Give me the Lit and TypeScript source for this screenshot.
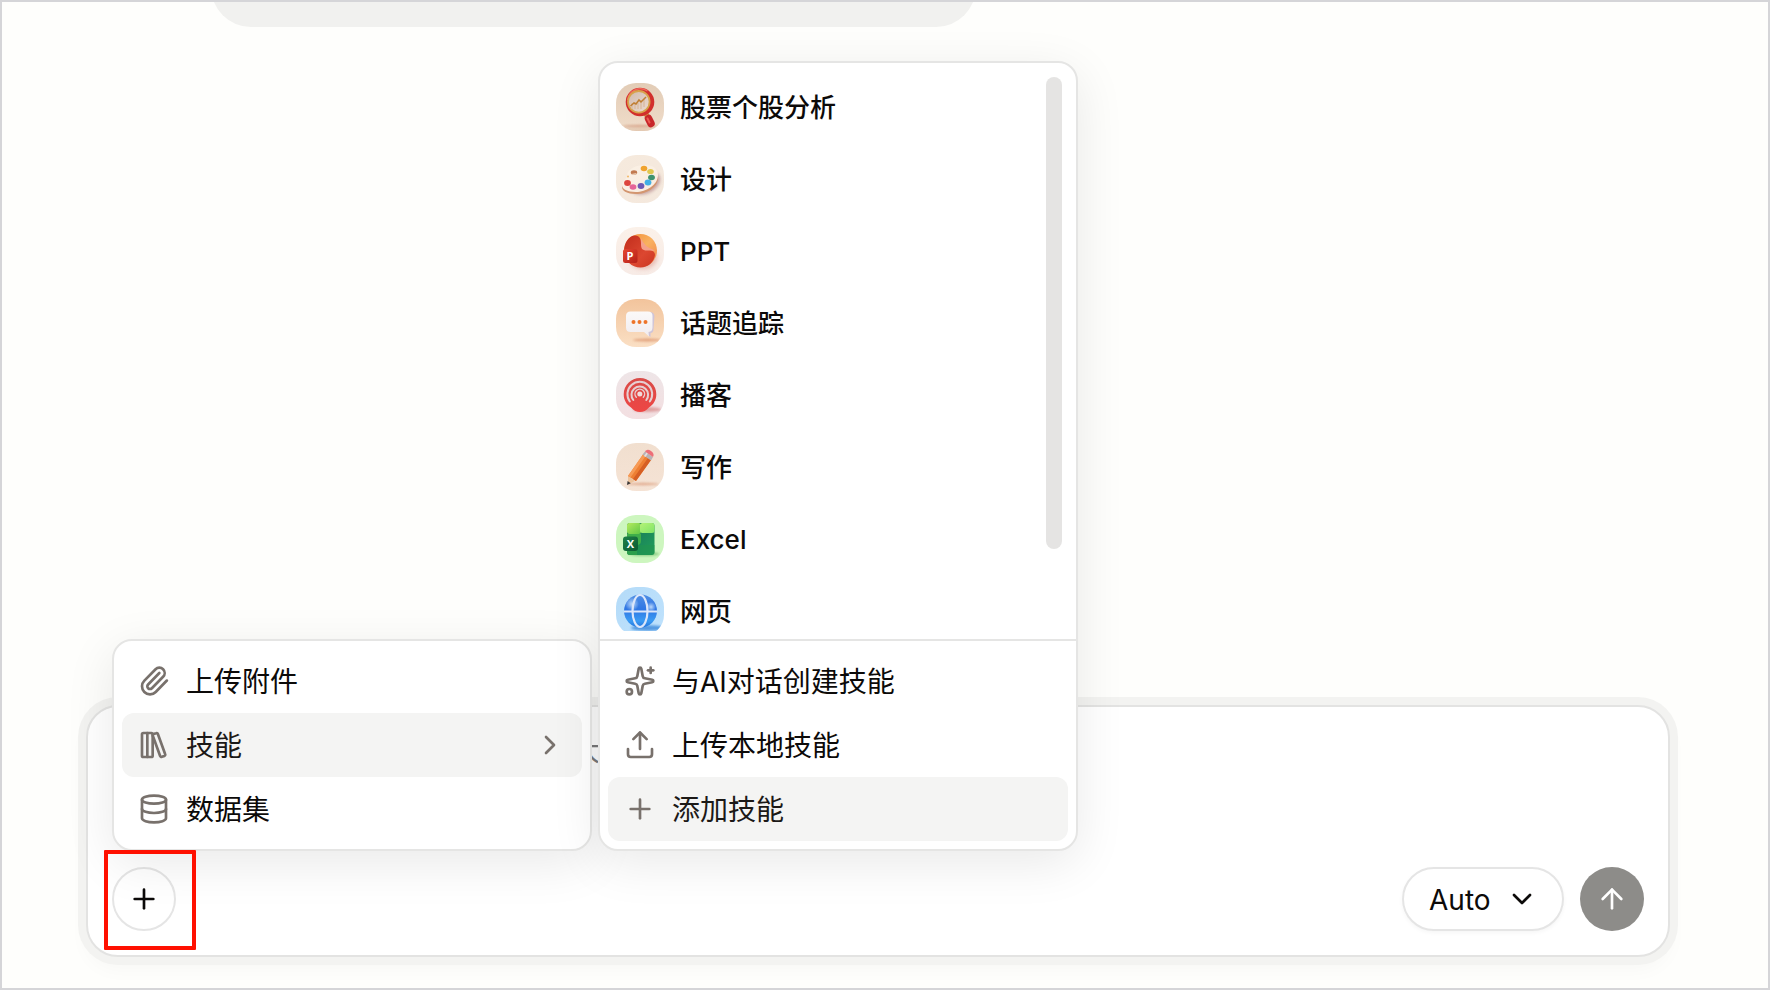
import { LitElement, html, svg, css } from "lit";
import type { SVGTemplateResult } from "lit";
import { customElement, property, state } from "lit/decorators.js";

/* ---------- line icons, drawn on a 24-unit grid ---------- */
const lineIcons: Record<string, SVGTemplateResult> = {
  paperclip: svg`<path d="m16 6-8.414 8.586a2 2 0 0 0 2.829 2.829l8.414-8.586a4 4 0 1 0-5.657-5.657l-8.379 8.551a6 6 0 1 0 8.485 8.485l8.379-8.551"/>`,
  library: svg`<rect width="8" height="18" x="3" y="3" rx="1"/><path d="M7 3v18"/><path d="M20.4 18.9c.2.5-.1 1.1-.6 1.3l-1.900.7c-.5.2-1.100-.1-1.300-.6L11.100 5.100c-.2-.5.1-1.100.6-1.300l1.900-.7c.5-.2 1.100.1 1.300.6Z"/>`,
  database: svg`<ellipse cx="12" cy="5" rx="9" ry="3"/><path d="M3 5v14a9 3 0 0 0 18 0V5"/><path d="M3 12a9 3 0 0 0 18 0"/>`,
  sparkles: svg`<path d="M11.017 2.814a1 1 0 0 1 1.966 0l1.051 5.558a2 2 0 0 0 1.594 1.594l5.558 1.051a1 1 0 0 1 0 1.966l-5.558 1.051a2 2 0 0 0-1.594 1.594l-1.051 5.558a1 1 0 0 1-1.966 0l-1.051-5.558a2 2 0 0 0-1.594-1.594l-5.558-1.051a1 1 0 0 1 0-1.966l5.558-1.051a2 2 0 0 0 1.594-1.594z"/><path d="M20 2v4"/><path d="M22 4h-4"/><circle cx="4" cy="20" r="2"/>`,
  upload: svg`<path d="M12 2.8v12.2"/><path d="m7 7.600 5-5 5 5"/><path d="M3 15v4a2 2 0 0 0 2 2h14a2 2 0 0 0 2-2v-4"/>`,
  plus: svg`<path d="M5 12h14"/><path d="M12 5v14"/>`,
  chevronRight: svg`<path d="m9 18 6-6-6-6"/>`,
  chevronDown: svg`<path d="m6 9 6 6 6-6"/>`,
  arrowUp: svg`<path d="m5 12 7-7 7 7"/><path d="M12 19V5"/>`,
};

/* A soft shadow; its region spans the whole 48-unit tile. */
const blur = (id: string, amount: number) => svg`
  <filter id=${id} filterUnits="userSpaceOnUse" x="-12" y="-12" width="72" height="72">
    <feGaussianBlur stdDeviation=${amount}/>
  </filter>`;

/* ---------- illustrated skill icons, drawn on a 48-unit grid ---------- */
const skillIcons: Record<string, SVGTemplateResult> = {
  stock: svg`
    <defs>
      <linearGradient id="st-bg" x1="0" y1="0" x2="0" y2="1"><stop offset="0" stop-color="#e2ccb6"/><stop offset=".85" stop-color="#eedac7"/><stop offset="1" stop-color="#e3c8b1"/></linearGradient>
      <linearGradient id="st-lens" x1="0" y1="0" x2="1" y2="1"><stop offset="0" stop-color="#d0bab0"/><stop offset="1" stop-color="#ecdccf"/></linearGradient>
      ${blur("st-blur", 1)}
    </defs>
    <rect width="48" height="48" fill="url(#st-bg)"/>
    <ellipse cx="24" cy="43" rx="17" ry="1.200" fill="#cf8c70" opacity=".6" filter="url(#st-blur)"/>
    <path d="m29.500 30 4 7" stroke="#c9923c" stroke-width="5"/>
    <path d="m32.500 35.500 2.500 5" stroke="#c8262a" stroke-width="7.500" stroke-linecap="round"/>
    <path d="m31.500 35.500 2 4" stroke="#ed5a50" stroke-width="2" stroke-linecap="round"/>
    <circle cx="24" cy="19" r="14.300" fill="#d22f2c"/>
    <path d="M11.500 17a13 13 0 0 1 20-9" fill="none" stroke="#f0695c" stroke-width="1.400"/>
    <circle cx="22.800" cy="18.800" r="10.800" fill="url(#st-lens)" stroke="#d7a24c" stroke-width="1.800"/>
    <path d="M16 20v6M19 19v7M22 20v6M25 17v9M28 16v8" stroke="#dbb99d" stroke-width="1.200"/>
    <path d="m14.500 23 3.500-3 2 1 3-4 2 2 5-5" fill="none" stroke="#c07f34" stroke-width="1.500"/>`,
  design: svg`
    <defs>
      <linearGradient id="de-bg" x1="0" y1="0" x2="1" y2="1"><stop offset="0" stop-color="#f6eadd"/><stop offset="1" stop-color="#f4e8dd"/></linearGradient>
      <linearGradient id="de-pal" x1="0" y1="0" x2="1" y2="1"><stop offset="0" stop-color="#fbf1e5"/><stop offset="1" stop-color="#f8ece1"/></linearGradient>
      ${blur("de-blur", 1.5)}
    </defs>
    <rect width="48" height="48" fill="url(#de-bg)"/>
    <ellipse cx="29" cy="28" rx="16" ry="10.500" transform="rotate(-24 29 28)" fill="#b98e90" opacity=".75" filter="url(#de-blur)"/>
    <path d="M11 22.500c0-6 9-11 18-11 8 0 13 4 13 11 0 10.500-12 16.500-22 16.500-9 0-14-3-14-7 0-5 6-6 5-9.500z" fill="#d39670"/>
    <path d="M11 20c1-6 9-10 18-10 8 0 13 4 13 10 0 10-12 17-22 17-9 0-14-3-14-7 0-5 6-6 5-10z" fill="url(#de-pal)"/>
    <ellipse cx="18" cy="17.500" rx="3.200" ry="2.200" fill="#c27a50"/><path d="M15.500 19q3 2 5.500-1z" fill="#f3dcc6"/>
    <ellipse cx="28" cy="13.500" rx="3.300" ry="2.700" fill="#f0a32e"/>
    <ellipse cx="34.500" cy="16.500" rx="3.300" ry="2.600" fill="#dfc852"/>
    <ellipse cx="35.500" cy="22.500" rx="3.400" ry="2.800" fill="#3d9270"/>
    <ellipse cx="32" cy="27.500" rx="3.400" ry="2.900" fill="#41b0e5"/>
    <ellipse cx="25" cy="31" rx="3.400" ry="2.900" fill="#6d59b4"/>
    <ellipse cx="17" cy="32" rx="3.400" ry="2.800" fill="#e56498"/>
    <ellipse cx="11.500" cy="28" rx="3.400" ry="2.900" fill="#dd453d"/>
    <circle cx="12" cy="21.500" r="1" fill="#f2b765"/>`,
  ppt: svg`
    <defs>
      <linearGradient id="pp-bg" x1="0" y1="0" x2="0" y2="1"><stop offset="0" stop-color="#fbf1e9"/><stop offset="1" stop-color="#f7ebe6"/></linearGradient>
      <linearGradient id="pp-or" x1="0" y1="0" x2="1" y2="1"><stop offset="0" stop-color="#f08a35"/><stop offset=".5" stop-color="#f9b160"/><stop offset="1" stop-color="#f08049"/></linearGradient>
      <linearGradient id="pp-red" x1="0" y1="0" x2="1" y2="1"><stop offset="0" stop-color="#c12d1c"/><stop offset=".6" stop-color="#dc4730"/><stop offset="1" stop-color="#cb3521"/></linearGradient>
      <linearGradient id="pp-box" x1="0" y1="0" x2="1" y2="1"><stop offset="0" stop-color="#e54631"/><stop offset="1" stop-color="#b51f17"/></linearGradient>
      ${blur("pp-blur", 2)}
    </defs>
    <rect width="48" height="48" fill="url(#pp-bg)"/>
    <ellipse cx="27" cy="31" rx="14" ry="11" fill="#dc9b90" opacity=".6" filter="url(#pp-blur)"/>
    <circle cx="24.500" cy="23.500" r="16.500" fill="url(#pp-or)"/>
    <path d="M25 11q3 9 14 12.500l-14 1z" fill="#f5a08a"/>
    <path d="M19 8.500c5 0 6 4 6 8 0 5 1 7 6 7 4 0 8 0 8 4.500C38 35 32 40.500 24.500 40.500A16.500 16.500 0 0 1 8 24C8 16 13 8.500 19 8.500z" fill="url(#pp-red)"/>
    <rect x="7" y="22" width="14.500" height="14" rx="2.500" fill="url(#pp-box)"/>
    <text x="14" y="33" text-anchor="middle" class="badge-letter">P</text>`,
  topic: svg`
    <defs>
      <linearGradient id="to-bg" x1="0" y1="0" x2="0" y2="1"><stop offset="0" stop-color="#f2c49c"/><stop offset="1" stop-color="#fadfc4"/></linearGradient>
      <linearGradient id="to-bub" x1="0" y1="0" x2="0" y2="1"><stop offset="0" stop-color="#fbf9f9"/><stop offset="1" stop-color="#f1ecef"/></linearGradient>
      ${blur("to-blur", 1)}
    </defs>
    <rect width="48" height="48" fill="url(#to-bg)"/>
    <ellipse cx="31" cy="41" rx="14" ry="1.500" fill="#d98d66" opacity=".7" filter="url(#to-blur)"/>
    <path d="M15 13h19q4 0 4.500 4l-1 13q0 4-3 4v4l-5-4z" fill="#cfc5d8"/>
    <path d="M14.500 12.500H32q4.500 0 4.500 4.500v11.500q0 4-4 4.500l.500 4.500-5-4.500H14.500Q10 33 10 28.500V17q0-4.500 4.500-4.500z" fill="url(#to-bub)"/>
    <circle cx="17.500" cy="23" r="2" fill="#ee7429"/><circle cx="23.500" cy="23" r="2" fill="#ee7429"/><circle cx="29.500" cy="23" r="2" fill="#ee7429"/>`,
  podcast: svg`
    <defs>
      <linearGradient id="po-bg" x1="0" y1="0" x2="0" y2="1"><stop offset="0" stop-color="#eee5e7"/><stop offset="1" stop-color="#f3dfe1"/></linearGradient>
      <linearGradient id="po-red" x1="0" y1="0" x2="0" y2="1"><stop offset="0" stop-color="#d94b48"/><stop offset="1" stop-color="#ee4644"/></linearGradient>
      ${blur("po-blur", 1.3)}
    </defs>
    <rect width="48" height="48" fill="url(#po-bg)"/>
    <ellipse cx="31" cy="38.500" rx="14" ry="2.500" fill="#d98d8d" opacity=".75" filter="url(#po-blur)"/>
    <path d="M24 7a16.300 16.300 0 0 1 16.300 16.300c0 6-3 10.500-7.300 13.200q-4 4.500-9 4.500t-9-4.500c-4.300-2.700-7.300-7.200-7.300-13.200A16.300 16.300 0 0 1 24 7z" fill="url(#po-red)"/>
    <g fill="none" stroke="#e6cfd1" stroke-width="2" stroke-linecap="round">
      <path d="M13.800 30.500a12.400 12.400 0 1 1 20 0"/><path d="M17.300 29a8.300 8.300 0 1 1 13 0"/><path d="M20.300 26.300a4.800 4.800 0 1 1 7 0" stroke-width="1.400"/>
    </g>
    <circle cx="23.800" cy="23" r="2.500" fill="#f2dcdc"/>`,
  writing: svg`
    <defs>
      <linearGradient id="wr-bg" x1="0" y1="0" x2="0" y2="1"><stop offset="0" stop-color="#f1dfcf"/><stop offset="1" stop-color="#f5e3d5"/></linearGradient>
      ${blur("wr-blur", 0.8)}
    </defs>
    <rect width="48" height="48" fill="url(#wr-bg)"/>
    <ellipse cx="27" cy="41" rx="16" ry="1.200" fill="#d88f6a" opacity=".65" filter="url(#wr-blur)"/>
    <path d="m12 33 7 5-7 3.500z" fill="#edc49d"/>
    <path d="m11.600 38 3.200 2.200L11 42z" fill="#3c3838"/>
    <path d="M27 11.500 35 17 20 38l-8-5z" fill="#ee7f33"/>
    <path d="M32 15 35 17 20 38l-3-2z" fill="#d65f24"/>
    <path d="m27 11.500 2.500 1.700-15 21.300L12 33z" fill="#f79a55"/>
    <path d="m29 8.500 8 5.500-2 3.500-8.500-6z" fill="#b9b2b4"/>
    <path d="m30.500 9.500 1.500 1-2.500 3.500-1.500-1z" fill="#e3dede"/>
    <path d="m29 8.500 1-1q2-1.500 5 .5t2.500 4.500l-.5 1.500z" fill="#ed6f78"/>`,
  excel: svg`
    <defs>
      <linearGradient id="ex-a" x1="0" y1="0" x2="1" y2="1"><stop offset="0" stop-color="#b4ea5e"/><stop offset="1" stop-color="#5fc746"/></linearGradient>
      <linearGradient id="ex-b" x1="0" y1="0" x2="1" y2="1"><stop offset="0" stop-color="#b5f277"/><stop offset="1" stop-color="#7fe567"/></linearGradient>
      <linearGradient id="ex-c" x1="0" y1="0" x2="1" y2="1"><stop offset="0" stop-color="#14705a"/><stop offset="1" stop-color="#22a05a"/></linearGradient>
      <linearGradient id="ex-d" x1="0" y1="0" x2="1" y2="1"><stop offset="0" stop-color="#1d8148"/><stop offset="1" stop-color="#0d5a33"/></linearGradient>
      ${blur("ex-blur", 1)}
    </defs>
    <rect width="48" height="48" fill="#cdf6bf"/>
    <ellipse cx="28" cy="39" rx="15" ry="2" fill="#6bb866" opacity=".65" filter="url(#ex-blur)"/>
    <rect x="11" y="8" width="27.500" height="32" rx="3" fill="url(#ex-c)"/>
    <path d="M11 19h14v7q0 4-4 4v10h-7q-3 0-3-3z" fill="#3fae4a"/>
    <path d="M21 30h17.500v7q0 3-3 3H14q-3 0-3-3v-3h10z" fill="#22944f" opacity=".6"/>
    <rect x="11" y="8" width="14" height="11" rx="2.500" fill="url(#ex-a)"/>
    <rect x="24" y="8" width="14.500" height="10" rx="2.500" fill="url(#ex-b)"/>
    <rect x="7" y="21.500" width="15" height="14.500" rx="3" fill="url(#ex-d)"/>
    <text x="14.500" y="33" text-anchor="middle" class="badge-letter">X</text>`,
  web: svg`
    <defs>
      <linearGradient id="we-bg" x1="0" y1="0" x2="1" y2="1"><stop offset="0" stop-color="#b4dbf8"/><stop offset="1" stop-color="#bfe2fd"/></linearGradient>
      <linearGradient id="we-ball" x1="0" y1="0" x2="0" y2="1"><stop offset="0" stop-color="#508ee4"/><stop offset=".45" stop-color="#2f76e4"/><stop offset=".8" stop-color="#3a9bf3"/><stop offset="1" stop-color="#2273dd"/></linearGradient>
      <radialGradient id="we-hi"><stop offset="0" stop-color="#dcefff" stop-opacity=".8"/><stop offset="1" stop-color="#dcefff" stop-opacity="0"/></radialGradient>
      ${blur("we-blur", 1.3)}
    </defs>
    <rect width="48" height="48" fill="url(#we-bg)"/>
    <ellipse cx="32" cy="41" rx="17" ry="2.800" fill="#3987da" opacity=".8" filter="url(#we-blur)"/>
    <circle cx="24.500" cy="24" r="16.500" fill="url(#we-ball)"/>
    <circle cx="16" cy="17" r="7" fill="url(#we-hi)"/><circle cx="35" cy="20" r="5" fill="url(#we-hi)"/>
    <g fill="none" stroke="#dbe6fa" stroke-width="2.200"><ellipse cx="24" cy="24" rx="7.500" ry="16"/><path d="M8 24.500h33"/></g>`,
};

@customElement("line-icon")
export class LineIcon extends LitElement {
  @property() name = "plus";

  static styles = css`
    :host {
      display: block;
      flex: none;
      width: 32px;
      height: 32px;
    }
    .glyph {
      display: block;
      width: 100%;
      height: 100%;
      fill: none;
      stroke: currentColor;
      stroke-width: 2;
      stroke-linecap: round;
      stroke-linejoin: round;
    }
  `;

  render() {
    return html`<svg class="glyph" viewBox="0 0 24 24" aria-hidden="true">${lineIcons[this.name]}</svg>`;
  }
}

@customElement("skill-icon")
export class SkillIcon extends LitElement {
  @property() name = "stock";

  static styles = css`
    :host {
      display: block;
      flex: none;
      width: 48px;
      height: 48px;
      border-radius: 20px;
      overflow: hidden;
    }
    .art {
      display: block;
      width: 100%;
      height: 100%;
    }
    .badge-letter {
      font: 700 11px "Open Sans", "Noto Sans", sans-serif;
      fill: #fff;
    }
  `;

  render() {
    return html`<svg class="art" viewBox="0 0 48 48" aria-hidden="true">${skillIcons[this.name]}</svg>`;
  }
}

const skills = [
  { icon: "stock", label: "股票个股分析" },
  { icon: "design", label: "设计" },
  { icon: "ppt", label: "PPT" },
  { icon: "topic", label: "话题追踪" },
  { icon: "podcast", label: "播客" },
  { icon: "writing", label: "写作" },
  { icon: "excel", label: "Excel" },
  { icon: "web", label: "网页" },
];

const attachItems = [
  { icon: "paperclip", label: "上传附件", submenu: false },
  { icon: "library", label: "技能", submenu: true },
  { icon: "database", label: "数据集", submenu: false },
];

const skillActions = [
  { icon: "sparkles", label: "与AI对话创建技能" },
  { icon: "upload", label: "上传本地技能" },
  { icon: "plus", label: "添加技能" },
];

@customElement("app-root")
export class AppRoot extends LitElement {
  @state() private activeItem = 1;
  @state() private activeAction = 2;

  static styles = css`
    :host {
      display: block;
      color: #0c0a09;
      font-family: Inter, "Noto Sans CJK SC", sans-serif;
      font-size: 28px;
      line-height: 40px;
    }
    *,
    *::before {
      box-sizing: border-box;
    }
    button,
    select,
    textarea {
      margin: 0;
      padding: 0;
      border: 0;
      background: none;
      color: inherit;
      font: inherit;
    }
    .page {
      display: flex;
      flex-direction: column;
      justify-content: space-between;
      min-height: 100vh;
      padding: 0 98px 31px 84px;
      border: 2px solid #d5d5d8;
      background: #fefefc;
      overflow: hidden;
    }
    .history {
      display: flex;
      align-items: flex-end;
      height: 25px;
      padding: 0 694px 0 125px;
      overflow: hidden;
    }
    .message {
      flex: 1;
      height: 96px;
      border-radius: 40px;
      background: #f1f1ef;
    }
    .composer {
      display: flex;
      flex-direction: column;
      gap: 8px;
      padding: 24px;
      border: 2px solid #e3e3e2;
      border-radius: 32px;
      background: #fff;
      box-shadow: 0 0 0 8px #f3f3f1, 0 12px 20px rgba(0, 0, 0, 0.03);
    }
    .prompt {
      display: block;
      width: 100%;
      height: 128px;
      padding: 0 4px;
      resize: none;
      outline: none;
      overflow: hidden;
    }
    .prompt::placeholder {
      color: #79797a;
      opacity: 1;
    }
    .toolbar {
      display: flex;
      align-items: center;
      gap: 16px;
    }
    .attach {
      position: relative;
      margin-right: auto;
    }
    .round {
      display: grid;
      place-items: center;
      width: 64px;
      height: 64px;
      border-radius: 50%;
    }
    .add {
      border: 2px solid #e5e5e5;
      background: #fff;
    }
    .marker {
      position: absolute;
      inset: -17px -20px -19px -8px;
      z-index: 3;
      border: 4px solid #ff1000;
      border-radius: 1px;
      pointer-events: none;
    }
    .model {
      display: grid;
      align-items: center;
      width: 162px;
      height: 64px;
      border: 2px solid #e5e5e5;
      border-radius: 32px;
      background: #fff;
      box-shadow: 0 2px 4px rgba(0, 0, 0, 0.04);
    }
    .model-select,
    .model-icon {
      grid-area: 1 / 1;
    }
    .model-select {
      width: 100%;
      height: 60px;
      padding: 2px 0 0 25px;
      appearance: none;
      outline: none;
    }
    .model-icon {
      justify-self: end;
      margin-right: 24px;
      pointer-events: none;
    }
    .send {
      background: #8d8c89;
      color: #fff;
    }
    .menu {
      position: absolute;
      width: 480px;
      border: 2px solid #e5e5e4;
      border-radius: 20px;
      background: #fff;
      box-shadow: 0 12px 50px rgba(0, 0, 0, 0.09);
    }
    .attach-menu {
      bottom: calc(100% + 16px);
      left: 0;
      z-index: 1;
    }
    .skill-menu {
      bottom: calc(100% + 16px);
      left: 486px;
      z-index: 2;
    }
    .rows {
      display: flex;
      flex-direction: column;
      padding: 8px;
    }
    .row {
      display: flex;
      align-items: center;
      gap: 16px;
      height: 64px;
      padding: 0 16px;
      border-radius: 12px;
      text-align: left;
    }
    .row-icon {
      color: #78716c;
    }
    .label {
      flex: 1;
      padding-top: 2px;
    }
    .active {
      background: #f4f4f3;
      color: #1c1917;
    }
    .skills {
      display: flex;
      align-items: flex-start;
      padding: 8px 14px 8px 8px;
      border-bottom: 2px solid #e5e5e4;
    }
    .skill-list {
      display: flex;
      flex: 1;
      flex-direction: column;
      height: 560px;
      overflow: hidden;
    }
    .skill {
      display: flex;
      flex: none;
      align-items: center;
      gap: 16px;
      padding: 12px 8px;
      font-size: 26px;
      font-weight: 500;
      text-align: left;
    }
    .scrollbar {
      width: 16px;
      height: 472px;
      margin-top: 6px;
      border-radius: 8px;
      background: #e5e4e3;
    }
  `;

  private renderAttachMenu() {
    return html`
      <div class="menu attach-menu" role="menu" aria-label="添加">
        <div class="rows">
          ${attachItems.map(
            (item, i) => html`
              <button
                type="button"
                class="row ${i === this.activeItem ? "active" : ""}"
                role="menuitem"
                @mouseenter=${() => (this.activeItem = i)}
              >
                <line-icon class="row-icon" name=${item.icon}></line-icon>
                <span class="label">${item.label}</span>
                ${item.submenu ? html`<line-icon class="row-icon" name="chevronRight"></line-icon>` : null}
              </button>
            `
          )}
        </div>
      </div>
    `;
  }

  private renderSkillMenu() {
    return html`
      <div class="menu skill-menu" role="menu" aria-label="技能">
        <div class="skills">
          <div class="skill-list">
            ${skills.map(
              (skill) => html`
                <button type="button" class="skill" role="menuitem">
                  <skill-icon name=${skill.icon}></skill-icon>
                  <span class="label">${skill.label}</span>
                </button>
              `
            )}
          </div>
          <div class="scrollbar"></div>
        </div>
        <div class="rows">
          ${skillActions.map(
            (item, i) => html`
              <button
                type="button"
                class="row ${i === this.activeAction ? "active" : ""}"
                role="menuitem"
                @mouseenter=${() => (this.activeAction = i)}
              >
                <line-icon class="row-icon" name=${item.icon}></line-icon>
                <span class="label">${item.label}</span>
              </button>
            `
          )}
        </div>
      </div>
    `;
  }

  render() {
    return html`
      <main class="page">
        <div class="history"><div class="message"></div></div>
        <form class="composer" @submit=${(e: Event) => e.preventDefault()}>
          <textarea
            class="prompt"
            aria-label="消息"
            placeholder="描述你的需求，可选择技能、数据集 大"
          ></textarea>
          <div class="toolbar">
            <div class="attach">
              <button class="round add" type="button" aria-label="添加" aria-haspopup="menu">
                <line-icon name="plus"></line-icon>
              </button>
              ${this.renderAttachMenu()} ${this.renderSkillMenu()}
              <span class="marker"></span>
            </div>
            <div class="model">
              <select class="model-select" aria-label="模型">
                <option>Auto</option>
              </select>
              <line-icon class="model-icon" name="chevronDown"></line-icon>
            </div>
            <button class="round send" type="submit" aria-label="发送">
              <line-icon name="arrowUp"></line-icon>
            </button>
          </div>
        </form>
      </main>
    `;
  }
}
